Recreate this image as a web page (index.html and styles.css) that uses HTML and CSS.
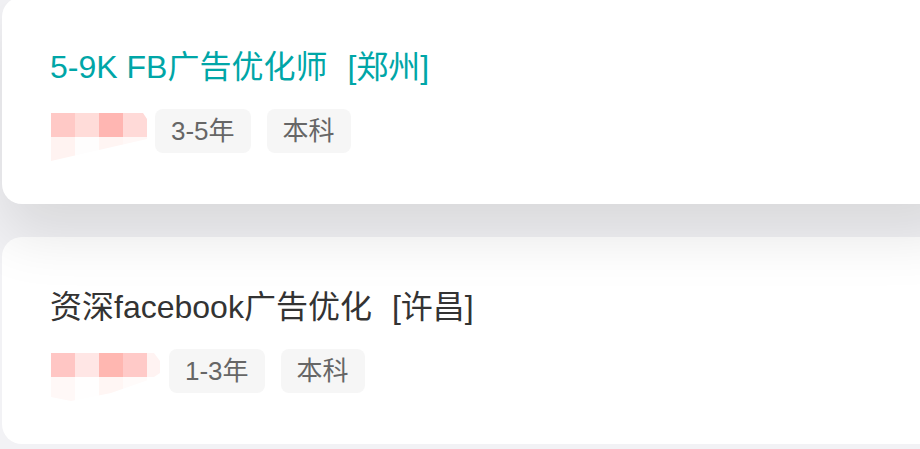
FILE: index.html
```html
<!DOCTYPE html>
<html lang="zh-CN">
<head>
  <meta charset="UTF-8">
  <meta name="viewport" content="width=device-width, initial-scale=1.0">
  <title>职位列表</title>
  <link rel="stylesheet" href="styles.css">
</head>
<body>
  <ul class="job-list">
    <li class="job-card active">
      <h3 class="job-title">5-9K FB广告优化师<span class="job-area">[郑州]</span></h3>
      <div class="job-info">
        <div class="mosaic mosaic-short">
          <i class="c1"></i><i class="c2"></i><i class="c3"></i><i class="c4"></i>
          <i class="d1"></i><i class="d2"></i><i class="d3"></i><i class="d4"></i>
        </div>
        <span class="tag">3-5年</span>
        <span class="tag">本科</span>
      </div>
    </li>
    <li class="job-card">
      <h3 class="job-title">资深facebook广告优化<span class="job-area">[许昌]</span></h3>
      <div class="job-info">
        <div class="mosaic mosaic-long">
          <i class="c1"></i><i class="c2"></i><i class="c3"></i><i class="c4"></i><i class="c5"></i>
          <i class="d1"></i><i class="d2"></i><i class="d3"></i><i class="d4"></i><i class="d5"></i>
        </div>
        <span class="tag">1-3年</span>
        <span class="tag">本科</span>
      </div>
    </li>
  </ul>
</body>
</html>
```

FILE: styles.css
```css
/* 职位列表 */
:root {
  --teal: #00a6a7;
  --text: #333;
  --muted: #666;
  --radius: 20px;
}

html, body {
  overflow: hidden;
}

body {
  font-family: 'Liberation Sans', 'Noto Sans CJK SC', sans-serif;
  background: #f2f2f5;
  margin: 0;
}

.job-list {
  list-style: none;
  margin: -3px 0 0 2px;
  padding: 0;
  width: 960px;
  display: flex;
  flex-direction: column;
  gap: 33px;
}

.job-card {
  position: relative;
  background: white;
  border-radius: var(--radius);
  padding: 48px 48px 43px;
}

.job-card.active {
  z-index: 1;
  box-shadow: 0 30px 60px rgba(0,0,0,0.11);
}

.job-title {
  margin: 0;
  font-size: 32px;
  font-weight: normal;
  line-height: 44px;
  color: var(--text);
  white-space: nowrap;
}

.job-card.active .job-title {
  color: var(--teal);
}

.job-area {
  margin-left: 20px;
}

.job-info {
  display: flex;
  align-items: flex-start;
  margin-top: 20px;
}

.tag {
  background: #f6f6f6;
  color: var(--muted);
  font-size: 26px;
  line-height: 44px;
  padding: 0 16px;
  border-radius: 8px;
  margin-right: 16px;
}

.mosaic {
  display: grid;
  grid-template-rows: 24px 24px;
  grid-auto-flow: row;
  margin: 4px 8px 0 1px;
}

.mosaic i {
  display: block;
}

.mosaic-short {
  grid-template-columns: repeat(4, 24px);
  clip-path: polygon(0 0, 92px 0, 96px 6px, 96px 26px, 0 48px);
}

.mosaic-long {
  grid-template-columns: repeat(4, 24px) 13px;
  margin-right: 9px;
  clip-path: polygon(0 0, 103px 0, 109px 8px, 109px 20px, 100px 26px, 60px 40px, 20px 48px, 0 44px);
}

.mosaic-short .c1 { background: #ffc9c6; }
.mosaic-short .c2 { background: #ffdcd9; }
.mosaic-short .c3 { background: #ffb6b2; }
.mosaic-short .c4 { background: #ffdad8; }
.mosaic-short .d1 { background: #fff3f1; }
.mosaic-short .d2 { background: #fefdfd; }
.mosaic-short .d3 { background: #fff5f3; }
.mosaic-short .d4 { background: #fff8f7; }

.mosaic-long .c1 { background: #ffc6c4; }
.mosaic-long .c2 { background: #ffe6e5; }
.mosaic-long .c3 { background: #ffb7b1; }
.mosaic-long .c4 { background: #ffcac8; }
.mosaic-long .c5 { background: #fff3f2; }
.mosaic-long .d1 { background: #fff8f7; }
.mosaic-long .d2 { background: #fffefe; }
.mosaic-long .d3 { background: #fff6f4; }
.mosaic-long .d4 { background: #fffbfa; }
.mosaic-long .d5 { background: #ffffff; }
```
